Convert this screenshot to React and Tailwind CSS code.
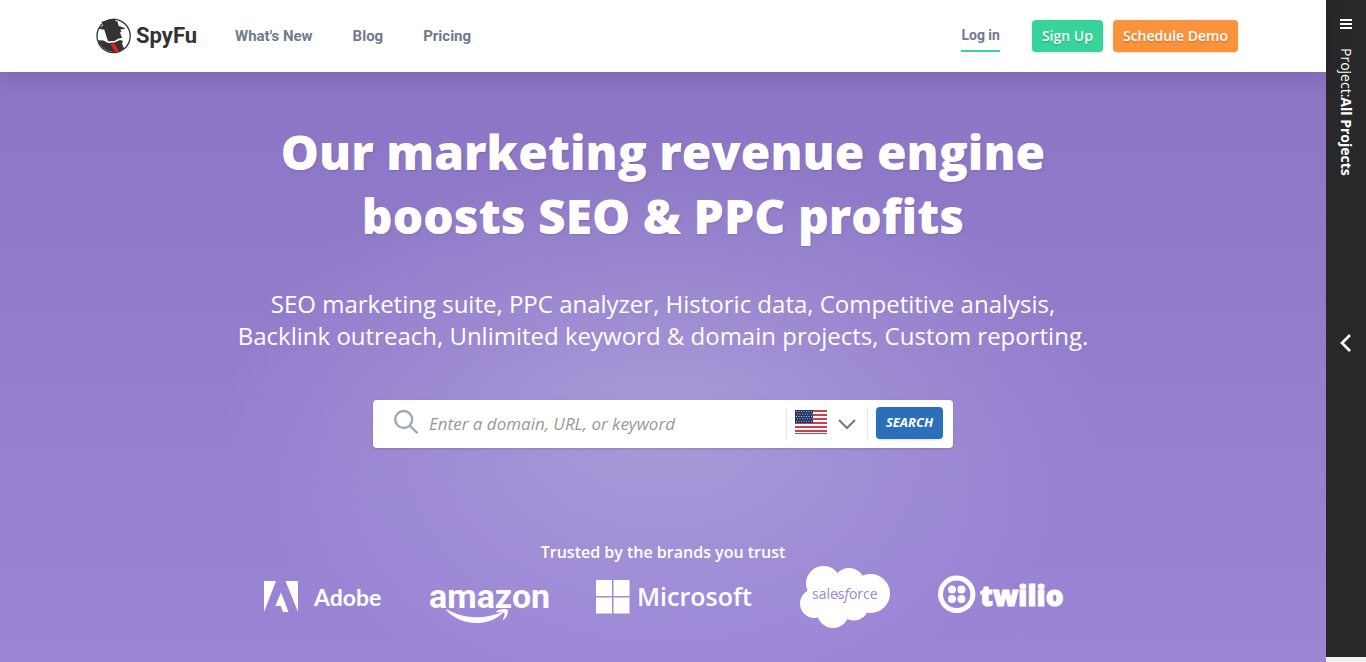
import React from 'react';
import { ChevronDown, ChevronLeft } from 'lucide-react';

const navLinks = ["What's New", 'Blog', 'Pricing'];

function SpyFuLogo() {
  return (
    <a href="#home" className="flex items-center gap-1" aria-label="SpyFu home">
      <svg width="36" height="36" viewBox="0 0 36 36">
        <circle cx="17.6" cy="18" r="16.6" fill="#fff" stroke="#333" strokeWidth="1.3" />
        <path d="M5.500 3.800 18.500.4l1 2.600 2 .5 1.200 4.600 7 2.200-5.500 1.400 1.300 2-1.500.800 2 5.500-3.500.5-4 2.400-6.500.300-3.700-11.500-5.800-.9 4.800-3.600z" fill="#333" />
        <path d="M2 22.300l5.500.2 4.500 2.600 6.500-.6 5.500-2.400 3 .9-1 2.500 2 5A16.600 16.600 0 0 1 2 22.300z" fill="#333" />
        <path d="m14.300 26 4.200-.4 4.400 8-3 .9z" fill="#ee1c25" />
      </svg>
      <span className="font-[Roboto,sans-serif] text-[22px] leading-8 font-bold text-[#333]">SpyFu</span>
    </a>
  );
}

function Navbar() {
  return (
    <header className="relative z-10 flex h-18 shrink-0 items-center bg-white pr-22 pl-24 shadow-[0_4px_20px_rgba(0,0,0,0.13)]">
      <SpyFuLogo />
      <nav className="ml-[38px] flex gap-10 font-[Roboto,sans-serif] text-[15px] font-bold text-[#717a8c]">
        {navLinks.map((label) => (
          <a key={label} href="#nav">
            {label}
          </a>
        ))}
      </nav>
      <div className="ml-auto flex items-center">
        <a
          href="#login"
          className="mr-8 flex h-8 items-center border-b-2 border-[#38d39f] font-[Roboto,sans-serif] text-sm font-bold text-[#717a8c]"
        >
          Log in
        </a>
        <button className="mr-2.5 h-8 rounded bg-[#36d49b] px-2.5 text-sm font-semibold text-white shadow-sm text-shadow-sm">
          Sign Up
        </button>
        <button className="h-8 rounded bg-[#fb923c] px-2.5 text-sm font-semibold text-white shadow-sm text-shadow-sm">
          Schedule Demo
        </button>
      </div>
    </header>
  );
}

function UsFlag() {
  const stripes = [0, 4, 8, 12, 16, 20];
  const stars = [];
  for (let y = 0; y < 5; y++) {
    for (let x = 0; x < 7; x++) {
      stars.push([1.5 + x * 2.5 + (y % 2), 1.6 + y * 2.4]);
    }
  }
  return (
    <svg className="mb-1" width="32" height="24" viewBox="0 0 32 24">
      <rect width="32" height="24" fill="#fff" />
      {stripes.map((y) => (
        <rect key={y} y={y} width="32" height="2" fill="#c8414b" />
      ))}
      <rect y="23" width="32" height="1" fill="#c8414b" />
      <rect width="18" height="13" fill="#1f3263" />
      {stars.map(([x, y]) => (
        <circle key={`${x}-${y}`} cx={x} cy={y} r=".55" fill="#cfd6e6" />
      ))}
    </svg>
  );
}

function SearchBar() {
  return (
    <form
      className="mt-12 flex h-12 w-full max-w-[580px] items-center rounded bg-white pr-2.5 pl-5 shadow"
      onSubmit={(e) => e.preventDefault()}
    >
      <svg className="mb-1 shrink-0" width="26" height="24" viewBox="0 0 26 24" fill="none" stroke="#a0a8b8" strokeWidth="2.4">
        <circle cx="10.700" cy="9.500" r="8.500" />
        <path d="m16.700 15.500 7.800 7.700" />
      </svg>
      <input
        type="text"
        aria-label="Domain, URL, or keyword"
        placeholder="Enter a domain, URL, or keyword"
        className="ml-2.5 h-12 min-w-0 flex-1 pb-0.5 text-[17px] italic outline-none placeholder:text-[#999]"
      />
      <div className="relative flex h-8 items-center gap-1 border-x border-[#e2e8f0] pr-1 pl-2">
        <UsFlag />
        <ChevronDown className="size-8 text-[#777]" strokeWidth={1.5} strokeLinecap="butt" strokeLinejoin="miter" />
        <select aria-label="Country" className="absolute inset-0 w-full opacity-0">
          <option>US</option>
          <option>UK</option>
        </select>
      </div>
      <button className="mb-0.5 ml-2 h-8 rounded bg-[#2b6fb8] px-2.5 text-[13px] font-bold text-white italic shadow-sm">
        SEARCH
      </button>
    </form>
  );
}

function Adobe() {
  return (
    <svg width="118" height="62" viewBox="0 0 118 62" className="overflow-visible" fill="#fff" role="img" aria-label="Adobe">
      <path d="M0 15h12L0 46zM21.500 15H34v31zM17 26.500 24.500 46H19l-2.200-6h-5.500z" />
      <text x="50" y="40" className="font-[Lato,sans-serif] text-[23px] font-bold">
        Adobe
      </text>
    </svg>
  );
}

function Amazon() {
  return (
    <svg width="118" height="62" viewBox="0 0 118 62" className="overflow-visible" fill="#fff" role="img" aria-label="amazon">
      <text x="-1" y="42" className="font-[Roboto,sans-serif] text-[34px] font-bold">
        amazon
      </text>
      <path d="M16.500 44.500c-.6-.8.2-1.300 1-.8 17 9.500 37 9.500 53.500 2.800 1.400-.5 2 .5.900 1.400C58 60 32 61 16.500 44.500z" />
      <path d="M66.500 45.300c2.500-2.500 9.500-3 11.300-1.500 1 1.600-.8 7.500-3.800 9.800-.7.500-1.300.2-1-.5 1-2.200 2-5 1.400-6-.7-1-5-1-7.300-.8-.8.100-1.200-.5-.6-1z" />
    </svg>
  );
}

function Microsoft() {
  return (
    <svg width="156" height="62" viewBox="0 0 156 62" className="overflow-visible" fill="#fff" role="img" aria-label="Microsoft">
      <path d="M0 14h16v16H0zM17.500 14h16v16h-16zM0 31.500h16v16H0zM17.500 31.500h16v16h-16z" />
      <text x="41" y="40" className="text-[25px] font-semibold">
        Microsoft
      </text>
    </svg>
  );
}

function Salesforce() {
  return (
    <svg width="90" height="62" viewBox="0 0 90 62" fill="#fff" role="img" aria-label="salesforce">
      <circle cx="23.500" cy="17.500" r="17.500" />
      <circle cx="49" cy="18" r="16" />
      <circle cx="70.500" cy="27.500" r="19.500" />
      <circle cx="14.500" cy="37.500" r="14.500" />
      <circle cx="33" cy="46" r="16" />
      <circle cx="54" cy="40" r="14.500" />
      <text x="12" y="33" className="fill-[#9a86d3] text-sm font-medium">
        sales<tspan className="italic">f</tspan>orce
      </text>
    </svg>
  );
}

function Twilio() {
  return (
    <svg width="125" height="62" viewBox="0 0 125 62" className="overflow-visible" fill="#fff" role="img" aria-label="twilio">
      <circle cx="18.700" cy="28.300" r="16.200" fill="none" stroke="#fff" strokeWidth="5" />
      <circle cx="14" cy="23.600" r="4" />
      <circle cx="23.400" cy="23.600" r="4" />
      <circle cx="14" cy="33" r="4" />
      <circle cx="23.400" cy="33" r="4" />
      <text x="42" y="40" className="text-[28px] font-extrabold" stroke="#fff" strokeWidth="1">
        twilio
      </text>
    </svg>
  );
}

function Hero() {
  return (
    <main className="flex flex-1 flex-col items-center bg-[radial-gradient(440px_270px_at_50%_350px,rgba(196,190,228,0.42),transparent),linear-gradient(#8b75c4,#9b86d6)] px-6 pt-12 pb-8 text-center text-white">
      <h1 className="text-5xl leading-16 font-extrabold text-shadow-[1px_1px_2px_rgba(0,0,0,0.12)]">
        Our marketing revenue engine
        <br />
        boosts SEO &amp; PPC profits
      </h1>
      <p className="mt-10 text-2xl leading-8">
        SEO marketing suite, PPC analyzer, Historic data, Competitive analysis,
        <br />
        Backlink outreach, Unlimited keyword &amp; domain projects, Custom reporting.
      </p>
      <div className="flex w-full justify-center text-left text-black">
        <SearchBar />
      </div>
      <h2 className="mt-23 font-semibold">Trusted by the brands you trust</h2>
      <div className="mt-0.5 flex flex-wrap justify-center gap-x-12">
        <Adobe />
        <Amazon />
        <Microsoft />
        <Salesforce />
        <Twilio />
      </div>
    </main>
  );
}

function ProjectSidebar() {
  return (
    <aside className="mb-[5px] flex w-10 shrink-0 flex-col items-center bg-[#28282a] text-white">
      <button aria-label="Project menu" className="mt-[19px] flex w-3 flex-col gap-0.5">
        <span className="h-0.5 bg-white" />
        <span className="h-0.5 bg-white" />
        <span className="h-0.5 bg-white" />
      </button>
      <p className="mt-[19px] text-sm [writing-mode:vertical-rl]">
        Project:<b>All Projects</b>
      </p>
      <button aria-label="Expand sidebar" className="mt-[151px]">
        <ChevronLeft className="size-8" strokeWidth={2} strokeLinecap="butt" strokeLinejoin="miter" />
      </button>
    </aside>
  );
}

export default function App() {
  return (
    <div className="flex min-h-screen bg-[#f3f3f3] font-['Open_Sans',sans-serif]">
      <div className="flex min-w-0 flex-1 flex-col">
        <Navbar />
        <Hero />
      </div>
      <ProjectSidebar />
    </div>
  );
}
